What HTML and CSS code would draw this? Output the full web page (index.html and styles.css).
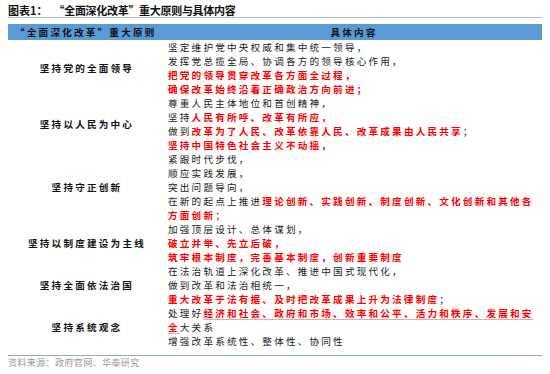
FILE: index.html
```html
<!DOCTYPE html>
<html lang="zh-CN">
<head>
<meta charset="utf-8">
<title>全面深化改革重大原则</title>
<link rel="stylesheet" href="styles.css">
</head>
<body>
<div class="page">
  <div class="title"><span class="fig">图表1：</span><span>“全面深化改革”重大原则与具体内容</span></div>
  <div class="table">
    <div class="th th-left">“全面深化改革”重大原则</div>
    <div class="th th-right">具体内容</div>

    <div class="label">坚持党的全面领导</div>
    <div class="content">
      <div>坚定维护党中央权威和集中统一领导，</div>
      <div>发挥党总揽全局、协调各方的领导核心作用，</div>
      <div class="red">把党的领导贯穿改革各方面全过程，</div>
      <div class="red">确保改革始终沿着正确政治方向前进；</div>
    </div>

    <div class="label">坚持以人民为中心</div>
    <div class="content">
      <div>尊重人民主体地位和首创精神，</div>
      <div>坚持<span class="red">人民有所呼、改革有所应，</span></div>
      <div>做到<span class="red">改革为了人民、改革依靠人民、改革成果由人民共享</span>；</div>
      <div class="red">坚持中国特色社会主义不动摇，</div>
    </div>

    <div class="label">坚持守正创新</div>
    <div class="content">
      <div>紧跟时代步伐，</div>
      <div>顺应实践发展，</div>
      <div>突出问题导向，</div>
      <div>在新的起点上推进<span class="red">理论创新、实践创新、制度创新、文化创新和其他各</span></div>
      <div><span class="red">方面创新</span>；</div>
    </div>

    <div class="label">坚持以制度建设为主线</div>
    <div class="content">
      <div>加强顶层设计、总体谋划，</div>
      <div class="red">破立并举、先立后破，</div>
      <div class="red">筑牢根本制度，完善基本制度，创新重要制度</div>
    </div>

    <div class="label">坚持全面依法治国</div>
    <div class="content">
      <div>在法治轨道上深化改革、推进中国式现代化，</div>
      <div>做到改革和法治相统一，</div>
      <div><span class="red">重大改革于法有据、及时把改革成果上升为法律制度</span>；</div>
    </div>

    <div class="label">坚持系统观念</div>
    <div class="content">
      <div>处理好<span class="red ul">经济和社会、政府和市场、效率和公平、活力和秩序、发展和安</span></div>
      <div><span class="red ul">全</span>大关系</div>
      <div>增强改革系统性、整体性、协同性</div>
    </div>
  </div>
  <div class="source">资料来源：政府官网、华泰研究</div>
</div>
</body>
</html>
```

FILE: styles.css
```css
html, body {
  margin: 0;
  padding: 0;
  background: #ffffff;
}

.page {
  width: 534px;
  padding: 4px 8px 0 8px;
  font-family: "Noto Sans CJK SC", "Noto Sans", sans-serif;
  color: #222222;
}

.title {
  font-size: 11px;
  line-height: 13px;
  font-weight: bold;
  color: #111111;
  letter-spacing: -0.3px;
  border-bottom: 1px solid #aebfd6;
  margin-bottom: 6px;
  display: flex;
}

.title .fig {
  margin-right: 6px;
  letter-spacing: 0;
}

.table {
  display: grid;
  grid-template-columns: 158px 1fr;
  font-size: 9.6px;
  line-height: 14px;
  letter-spacing: 2.2px;
  padding-bottom: 7px;
  border-bottom: 1px solid #8faad0;
}

.th {
  background: #5b9bd5;
  height: 16px;
  line-height: 16px;
  font-weight: bold;
  color: #111111;
}

.th-left {
  padding-left: 7px;
  white-space: nowrap;
}

.th-right {
  text-align: center;
}

.label {
  display: flex;
  align-items: center;
  justify-content: center;
  font-weight: bold;
  color: #111111;
}

.content {
  padding-left: 2px;
  white-space: nowrap;
}

.red {
  color: #ff0000;
  font-weight: bold;
}

.ul {
  text-decoration: underline;
  text-decoration-color: #f3a3a6;
  text-decoration-thickness: 1px;
  text-underline-offset: 2px;
}

.source {
  font-size: 9px;
  line-height: 14px;
  color: #9a9a9a;
  letter-spacing: 0.4px;
}
```
